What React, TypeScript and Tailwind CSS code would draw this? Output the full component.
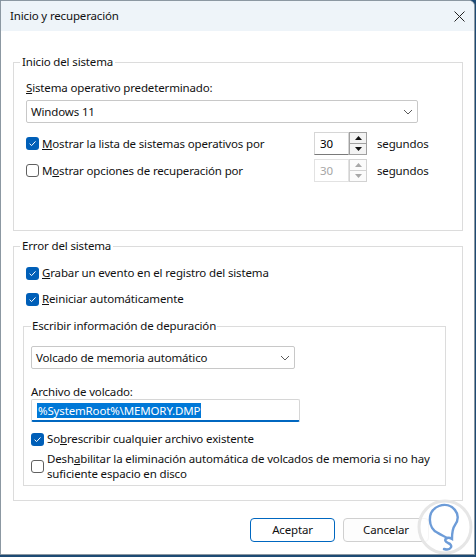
import React from 'react';

const Check = ({ checked }: { checked: boolean }) =>
  checked ? (
    <span className="w-[13px] h-[13px] rounded-[3px] bg-[#005fb8] flex items-center justify-center shrink-0">
      <svg width="9" height="9" viewBox="0 0 9 9">
        <path d="M1.6 4.7 L3.6 6.6 L7.5 2.4" fill="none" stroke="#ffffff" strokeWidth="1" />
      </svg>
    </span>
  ) : (
    <span className="w-[13px] h-[13px] rounded-[3px] border border-[#606060] bg-white shrink-0" />
  );

const Chevron = () => (
  <svg width="10" height="6" viewBox="0 0 10 6">
    <path d="M1 1 L5 5 L9 1" fill="none" stroke="#5a5a5a" strokeWidth="1" />
  </svg>
);

const Arrow = ({ up, disabled }: { up: boolean; disabled: boolean }) => (
  <svg width="7" height="4" viewBox="0 0 7 4">
    <path d={up ? 'M0 4 L3.5 0 L7 4 Z' : 'M0 0 L3.5 4 L7 0 Z'} fill={disabled ? '#a8a8a8' : '#111111'} />
  </svg>
);

const Spin = ({ disabled }: { disabled: boolean }) => (
  <div className="flex w-[53px] h-[23px]">
    {disabled ? (
      <div className="w-[35px] h-full border border-[#e2e2e2] pl-[5px] flex items-center text-[#a6a6a6]">30</div>
    ) : (
      <div className="w-[35px] h-full border border-[#d6d6d6] border-b-[#7a7a7a] pl-[5px] flex items-center text-black">30</div>
    )}
    <div className="w-[18px] h-full flex flex-col">
      {disabled ? (
        <>
          <div className="h-[12px] border border-[#d2d2d2] bg-[#fbfbfb] flex items-center justify-center">
            <Arrow up disabled />
          </div>
          <div className="h-[11px] border border-t-0 border-[#d2d2d2] bg-[#fbfbfb] flex items-center justify-center">
            <Arrow up={false} disabled />
          </div>
        </>
      ) : (
        <>
          <div className="h-[12px] border border-[#a0a0a0] bg-[#f3f3f3] flex items-center justify-center">
            <Arrow up disabled={false} />
          </div>
          <div className="h-[11px] border border-t-0 border-[#a0a0a0] bg-[#f3f3f3] flex items-center justify-center">
            <Arrow up={false} disabled={false} />
          </div>
        </>
      )}
    </div>
  </div>
);

const Logo = () => (
  <svg width="56" height="58" viewBox="0 0 56 58">
    <circle cx="28" cy="29" r="26" fill="#ffffff" fillOpacity="0.8" stroke="#e6e6e6" strokeWidth="3" />
    <path
      d="M21 35 C 11 31, 9 13, 22 8 C 35 3, 46 17, 38 27 C 35 31, 35 36, 35 41 C 30 38, 25 42, 31 45 C 37 47, 34 53, 27 51"
      fill="none"
      stroke="#6d9cd8"
      strokeWidth="2.4"
      strokeLinecap="round"
    />
    <path d="M21 35 C 24 37, 27 38, 30 40" fill="none" stroke="#6d9cd8" strokeWidth="2.4" strokeLinecap="round" />
  </svg>
);

export default function App() {
  return (
    <div className="w-[476px] h-[557px] bg-[#1d4a74] font-['Segoe_UI','Noto_Sans',sans-serif] text-[11.5px] tracking-[-0.15px] leading-[16px] text-[#111111]">
      <div className="relative w-[475px] h-[555px] bg-white border border-[#8c98a2] rounded-tr-[6px] overflow-hidden">
        {/* title bar */}
        <div className="h-[30px] bg-[#eef4f9] flex items-center justify-between pl-[9px] pr-[9px]">
          <span>Inicio y recuperación</span>
          <svg width="11" height="11" viewBox="0 0 11 11">
            <path d="M0.5 0.5 L10.5 10.5 M10.5 0.5 L0.5 10.5" stroke="#222222" strokeWidth="1" />
          </svg>
        </div>

        <div className="pt-[23px] pl-[12px] pr-[11px]">
          {/* Inicio del sistema */}
          <fieldset className="w-[450px] h-[177px] border border-[#dcdcdc] pl-[6px]">
            <legend className="px-[2px] leading-[16px]">Inicio del sistema</legend>
            <div className="pl-[6px]">
              <div className="mt-[10px]">
                <span className="underline">S</span>istema operativo predeterminado:
              </div>
              <div className="mt-[4px] w-[392px] h-[23px] border border-[#c8c8c8] rounded-[2px] flex items-center justify-between pl-[4px] pr-[4px]">
                <span>Windows 11</span>
                <Chevron />
              </div>
              <div className="mt-[9px] h-[23px] flex items-center">
                <div className="w-[288px] flex items-center gap-[3px]">
                  <Check checked />
                  <span>
                    <span className="underline">M</span>ostrar la lista de sistemas operativos por
                  </span>
                </div>
                <Spin disabled={false} />
                <span className="ml-[10px]">segundos</span>
              </div>
              <div className="mt-[4px] h-[23px] flex items-center">
                <div className="w-[288px] flex items-center gap-[3px]">
                  <Check checked={false} />
                  <span>
                    M<span className="underline">o</span>strar opciones de recuperación por
                  </span>
                </div>
                <Spin disabled />
                <span className="ml-[10px]">segundos</span>
              </div>
            </div>
          </fieldset>

          {/* Error del sistema */}
          <fieldset className="mt-[7px] w-[450px] h-[263px] border border-[#dcdcdc] pl-[6px]">
            <legend className="px-[2px] leading-[16px]">Error del sistema</legend>
            <div className="pl-[6px]">
              <div className="mt-[11px] h-[16px] flex items-center gap-[3px]">
                <Check checked />
                <span>
                  <span className="underline">G</span>rabar un evento en el registro del sistema
                </span>
              </div>
              <div className="mt-[10px] h-[16px] flex items-center gap-[3px]">
                <Check checked />
                <span>
                  <span className="underline">R</span>einiciar automáticamente
                </span>
              </div>

              <fieldset className="mt-[11px] -ml-[3px] w-[423px] h-[168px] border border-[#dcdcdc] pl-[7px]">
                <legend className="px-[1px] leading-[16px]">Escribir información de depuración</legend>
                <div className="mt-[12px] w-[264px] h-[23px] border border-[#c8c8c8] rounded-[2px] flex items-center justify-between pl-[4px] pr-[4px]">
                  <span>Volcado de memoria automático</span>
                  <Chevron />
                </div>
                <div className="mt-[15px] leading-[15px]">Archivo de volcado:</div>
                <div className="w-[269px] h-[23px] border border-[#d6d6d6] border-b-2 border-b-[#0067c0] rounded-[2px] flex items-center pl-[5px]">
                  <span className="bg-[#0078d7] text-white leading-[15px] px-[1px]">%SystemRoot%\MEMORY.DMP</span>
                </div>
                <div className="mt-[9px] h-[16px] flex items-center gap-[3px]">
                  <Check checked />
                  <span>
                    So<span className="underline">b</span>rescribir cualquier archivo existente
                  </span>
                </div>
                <div className="mt-[4px] flex items-center gap-[3px]">
                  <Check checked={false} />
                  <span className="leading-[15px] whitespace-nowrap">
                    Desh<span className="underline">a</span>bilitar la eliminación automática de volcados de memoria si no hay
                    <br />
                    suficiente espacio en disco
                  </span>
                </div>
              </fieldset>
            </div>
          </fieldset>

          <div className="mt-[17px] flex justify-end gap-[8px] pr-[34px]">
            <button className="w-[85px] h-[24px] border border-[#0067c0] rounded-[4px] bg-white">Aceptar</button>
            <button className="w-[86px] h-[24px] border border-[#d0d0d0] rounded-[4px] bg-[#fdfdfd]">Cancelar</button>
          </div>
        </div>

        <div className="absolute left-[416px] top-[497px]">
          <Logo />
        </div>
      </div>
    </div>
  );
}
